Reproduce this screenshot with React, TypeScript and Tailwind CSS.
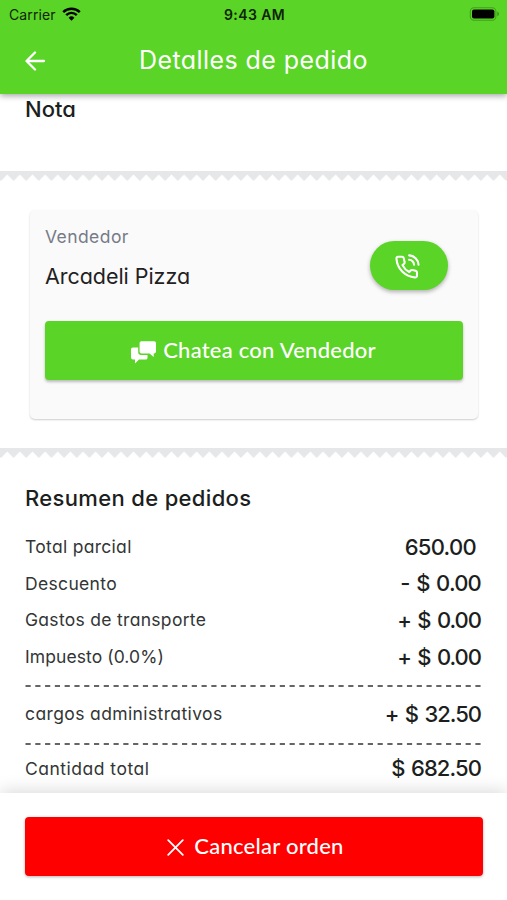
import type { ReactNode } from "react";

function Zigzag({ id }: { id: string }) {
  return (
    <svg className="block h-[10px] w-full shrink-0" aria-hidden="true">
      <defs>
        <pattern id={id} x="0.98" y="0" width="12.63" height="10" patternUnits="userSpaceOnUse">
          <path d="M0 0H12.63V10L6.31 3.6L0 10Z" fill="#e5e7e9" />
        </pattern>
      </defs>
      <rect width="100%" height="10" fill={`url(#${id})`} />
    </svg>
  );
}

function Row({ label, tracking, children }: { label: string; tracking: string; children: ReactNode }) {
  return (
    <div className="flex h-[36.6px] items-center justify-between">
      <span className={`text-[17.5px] text-[#333536] ${tracking}`}>{label}</span>
      <span className="pr-px text-[22px] font-medium text-[#1c1e20] [word-spacing:1.5px]">{children}</span>
    </div>
  );
}

function Dashes() {
  return (
    <svg className="block h-[2px] w-full" aria-hidden="true">
      <line x1="0.5" y1="1" x2="456" y2="1" stroke="#333" strokeWidth="1.4" strokeDasharray="5.2 4.58" />
    </svg>
  );
}

export default function App() {
  return (
    <div className="flex h-[900px] w-full flex-col overflow-hidden bg-white font-['Inter','Liberation_Sans',sans-serif] [font-feature-settings:'cv11']">
      <header className="relative z-10 h-[94px] shrink-0 bg-[#5bd428] shadow-[0_2px_6px_rgba(0,0,0,0.35)]">
        <div className="grid h-[28px] grid-cols-3 items-center pl-[9px] pr-[7px] text-[14px] text-[#102406] [font-feature-settings:normal]">
          <div className="flex items-center gap-[6px]">
            <span className="tracking-[0.1px]">Carrier</span>
            <svg width="19" height="14" viewBox="0 0 19 14" fill="none" stroke="#000" strokeWidth="2.4">
              <path d="M1.2 5.1a11.8 11.8 0 0 1 16.6 0" />
              <path d="M4.2 8.1a7.5 7.5 0 0 1 10.6 0" />
              <path d="M9.5 13.7L6.6 10.7a4.1 4.1 0 0 1 5.8 0z" fill="#000" stroke="none" />
            </svg>
          </div>
          <span className="text-center font-semibold tracking-[0.4px]">9:43 AM</span>
          <svg className="ml-auto" width="31" height="14" viewBox="0 0 31 14">
            <rect x="1.3" y="0.8" width="25.6" height="12.4" rx="3.8" fill="none" stroke="#3fa01b" strokeWidth="1.1" />
            <rect x="3" y="2.5" width="22.4" height="9" rx="2" fill="#000" />
            <path d="M28.4 4.8c1.9.6 1.9 3.8 0 4.4z" fill="#3a8a19" />
          </svg>
        </div>
        <div className="flex h-[66px] items-center pl-[25px]">
          <svg width="21" height="20" viewBox="0 0 21 20" fill="none" stroke="#fff" strokeWidth="2.3" strokeLinecap="round" strokeLinejoin="round">
            <path d="M10 1.500L1.500 10L10 18.500M1.800 10H19" />
          </svg>
          <h1 className="ml-[93px] whitespace-nowrap text-[25px] tracking-[0.42px] text-white">Detalles de pedido</h1>
        </div>
      </header>

      <section className="h-[77px] shrink-0 pl-[25px]">
        <h2 className="text-[22px] font-medium leading-[30px] tracking-[0.05px] text-[#1c1e20]">Nota</h2>
      </section>
      <Zigzag id="torn-top" />

      <section className="h-[267px] shrink-0 pl-[30px] pt-[29px]">
        <div className="h-[209px] w-[448px] rounded-[5px] bg-[#fafafa] px-[15px] shadow-[0_1px_2px_rgba(0,0,0,0.2)]">
          <div className="flex h-[111px] justify-between">
            <div className="pt-[15px]">
              <p className="text-[17.5px] leading-[24px] tracking-[0.42px] text-[#767b87]">Vendedor</p>
              <p className="mt-[13px] text-[21.5px] leading-[28px] tracking-[-0.05px] text-[#1f2122]">Arcadeli Pizza</p>
            </div>
            <button className="mr-[15px] mt-[31px] flex h-[49px] w-[78px] items-center justify-center rounded-full bg-[#5bd428] pr-[4px] pt-[2px] shadow-[0_2px_4px_rgba(0,0,0,0.3)]" aria-label="Llamar">
              <svg width="25" height="25" viewBox="0 0 24 24" fill="none" stroke="#fff" strokeWidth="2" strokeLinecap="round" strokeLinejoin="round">
                <path d="M13.500 1.300A9.500 9.500 0 0 1 22.600 10.300M13.500 5.500A5.200 5.200 0 0 1 18.300 10.300" />
                <path d="M8.300 3.600c-.2-.7-.8-1-1.500-1H3c-1 0-1.700.8-1.600 1.800C2.100 14.200 9.500 21.600 19.200 22.500c1 .1 1.900-.6 1.900-1.600v-3.200c0-.8-.5-1.400-1.300-1.600l-3.200-.7c-.6-.1-1.200.1-1.600.5l-1.300 1.400c-3-1.500-5-3.600-6.500-6.600l1.500-1.300c.5-.4.700-1 .5-1.600z" />
              </svg>
            </button>
          </div>
          <button className="flex h-[59px] w-[418px] items-center justify-center rounded-[4px] bg-[#5bd428] pr-px font-['Lato','Liberation_Sans',sans-serif] text-[22px] font-medium tracking-[0.24px] text-white shadow-[0_2px_3px_rgba(0,0,0,0.26)]">
            <svg className="mr-[7px] mt-[3px]" width="25" height="23" viewBox="0 0 25 23" fill="#fff">
              <path d="M10.500.3h12.600c1.100 0 1.900.8 1.900 1.900v8.300c0 1.100-.8 1.900-1.900 1.900h-.4v3.500l-4.200-3.500h-8c-1.100 0-1.900-.8-1.900-1.900V2.200C8.600 1.100 9.400.3 10.500.3z" />
              <path d="M1.900 6.500h5.300v4.700c0 1.700 1.300 2.800 2.800 2.800h6.500v2.700c0 1.100-.7 1.800-1.800 1.800H8L4 22.500v-4H1.900C.8 18.500 0 17.700 0 16.600V8.400c0-1.100.8-1.900 1.900-1.900z" />
            </svg>
            <span className="-translate-y-px">Chatea con Vendedor</span>
          </button>
        </div>
      </section>
      <Zigzag id="torn-bottom" />

      <section className="flex-1 px-[25px] pt-[25px]">
        <h2 className="mb-[15px] text-[22px] font-medium leading-[31px] tracking-[0.34px] text-[#1c1e20]">Resumen de pedidos</h2>
        <Row label="Total parcial" tracking="tracking-[0.3px]"><span className="mr-[5px] tracking-[-0.7px]">650.00</span></Row>
        <Row label="Descuento" tracking="tracking-[0.33px]"><span className="tracking-[-0.8px]">- $ 0.00</span></Row>
        <Row label="Gastos de transporte" tracking="tracking-[0.3px]"><span className="tracking-[-1px]">+ $ 0.00</span></Row>
        <Row label="Impuesto (0.0%)" tracking="tracking-[0.08px]"><span className="tracking-[-1px]">+ $ 0.00</span></Row>
        <div className="pt-[9.600px]"><Dashes /></div>
        <div className="pb-[10px] pt-[9px]"><Row label="cargos administrativos" tracking="tracking-[0.38px]"><span className="tracking-[-1px]">+ $ 32.50</span></Row></div>
        <Dashes />
        <div className="pt-[6px]"><Row label="Cantidad total" tracking="tracking-[0.5px]"><span className="tracking-[-0.9px]">$ 682.50</span></Row></div>
      </section>

      <footer className="relative z-10 h-[107px] shrink-0 bg-white px-[25px] pt-[24px] shadow-[0_-2px_16px_rgba(0,0,0,0.15)]">
        <button className="flex h-[59px] w-[458px] items-center justify-center rounded-[4px] bg-[#ff0000] pl-[3px] font-['Lato','Liberation_Sans',sans-serif] text-[22px] font-medium tracking-[0.25px] text-white shadow-[0_1px_3px_rgba(0,0,0,0.3)]">
          <svg className="mr-[10px] mt-px" width="17" height="17" viewBox="0 0 17 17" fill="none" stroke="#fff" strokeWidth="1.8" strokeLinecap="round">
            <path d="M1.200 1.200L15.800 15.800M15.800 1.200L1.200 15.800" />
          </svg>
          <span className="-translate-y-px">Cancelar orden</span>
        </button>
      </footer>
    </div>
  );
}
